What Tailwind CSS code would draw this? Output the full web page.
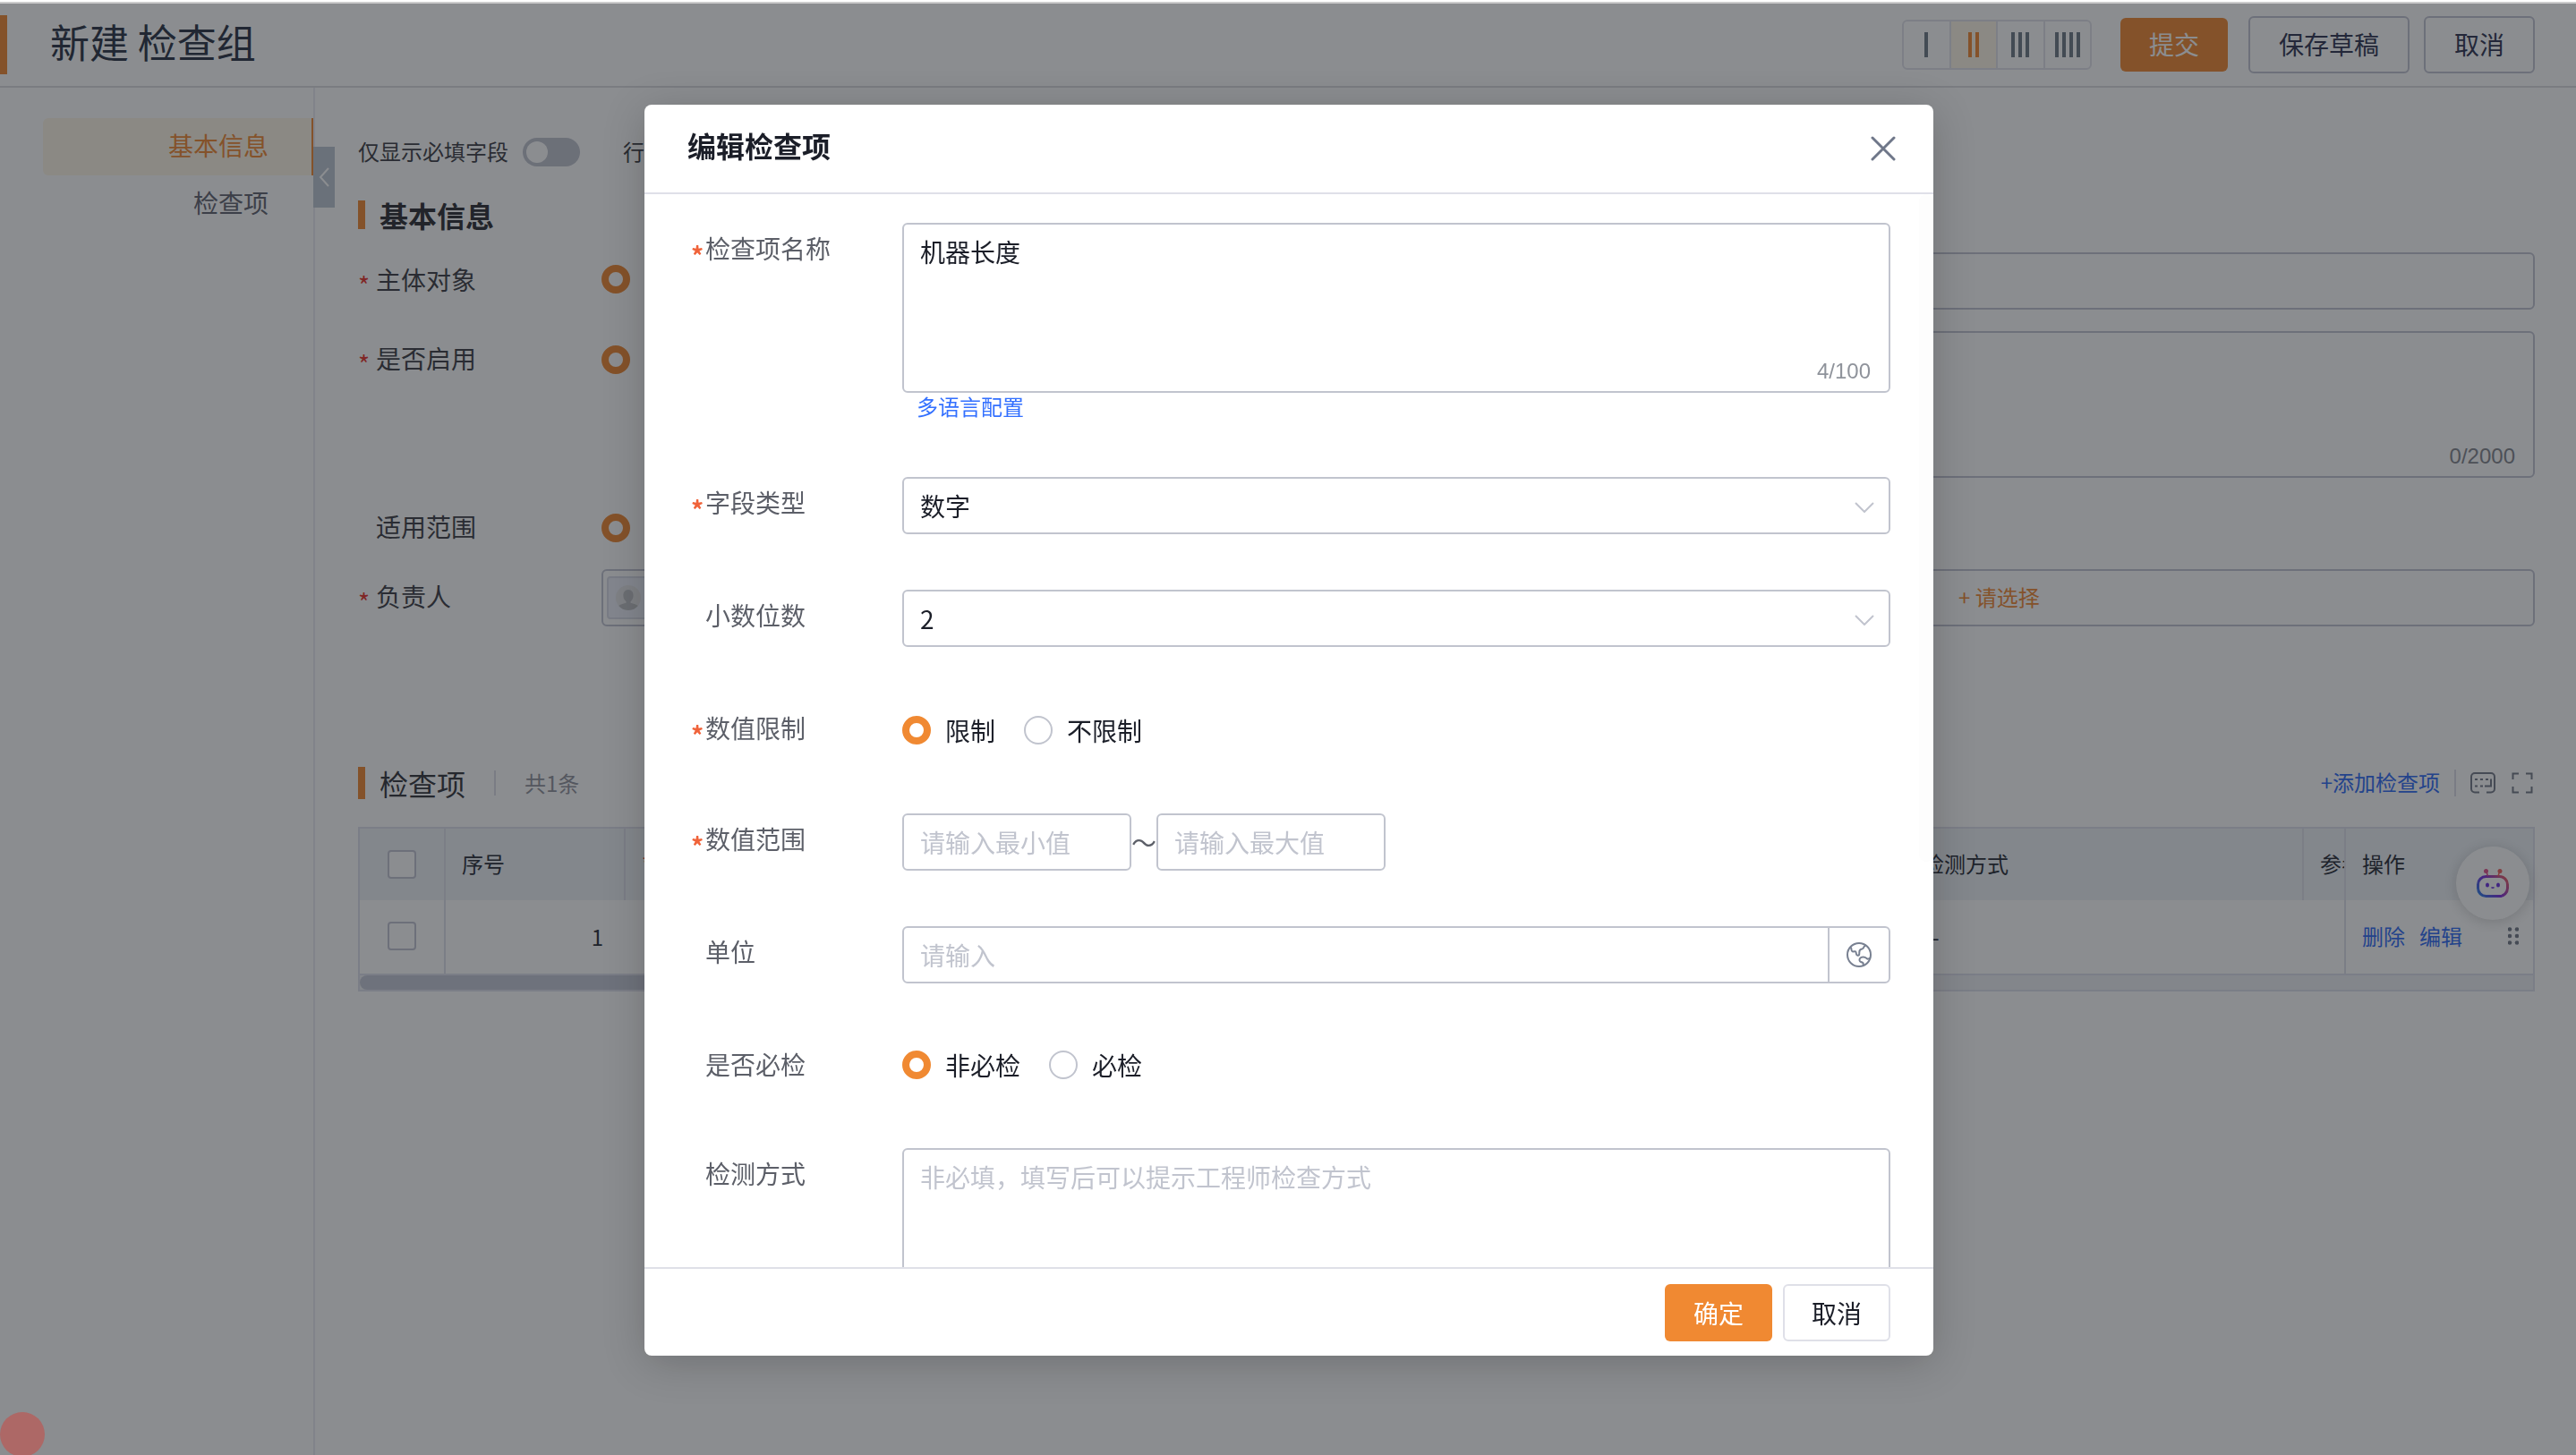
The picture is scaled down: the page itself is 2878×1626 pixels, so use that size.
<!DOCTYPE html>
<html lang="zh-CN">
<head>
<meta charset="utf-8">
<meta name="viewport" content="width=device-width, initial-scale=1">
<title>新建 检查组</title>
<script src="https://cdn.jsdelivr.net/npm/@tailwindcss/browser@4"></script>
</head>
<body class="min-h-screen flex flex-col overflow-hidden bg-white font-['Noto_Sans_CJK_SC',sans-serif] text-[28px] leading-10 text-[#3c3d44]">

  <!-- Page header -->
  <header class="mt-1 h-[94px] shrink-0 flex items-center border-b-2 border-[#dcdde0] pr-[46px]">
    <span class="w-2 h-[66px] bg-[#f08932]"></span>
    <h1 class="ml-12 pb-2 text-[44px] leading-[60px] text-[#2a3345]">新建 检查组</h1>
    <div class="ml-auto flex w-[212px] h-14 rounded-md border-2 border-[#e2e3ea] divide-x-2 divide-[#e2e3ea] overflow-hidden" role="group" aria-label="列数">
      <button type="button" aria-label="一列" class="flex-1 flex items-center justify-center gap-1 text-[#6f7a86]"><i class="w-1 h-7 bg-current"></i></button>
      <button type="button" aria-label="两列" class="flex-1 flex items-center justify-center gap-1 bg-[#fff7e6] text-[#f08932]"><i class="w-1 h-7 bg-current"></i><i class="w-1 h-7 bg-current"></i></button>
      <button type="button" aria-label="三列" class="flex-1 flex items-center justify-center gap-1 text-[#6f7a86]"><i class="w-1 h-7 bg-current"></i><i class="w-1 h-7 bg-current"></i><i class="w-1 h-7 bg-current"></i></button>
      <button type="button" aria-label="四列" class="flex-1 flex items-center justify-center gap-1 text-[#6f7a86]"><i class="w-1 h-7 bg-current"></i><i class="w-1 h-7 bg-current"></i><i class="w-1 h-7 bg-current"></i><i class="w-1 h-7 bg-current"></i></button>
    </div>
    <button type="button" class="ml-8 w-[120px] h-[60px] pb-0.5 rounded-md bg-[#f08932] text-white">提交</button>
    <button type="button" class="ml-[23px] w-[180px] h-16 pb-0.5 rounded-md border-2 border-[#c2c4d2] text-[#2e3350]">保存草稿</button>
    <button type="button" class="ml-4 w-[124px] h-16 pb-0.5 rounded-md border-2 border-[#c2c4d2] text-[#2e3350]">取消</button>
  </header>

  <div class="flex-1 flex">
    <!-- Section navigation -->
    <nav class="relative w-[352px] shrink-0 border-r-2 border-[#eaebf2] pt-[34px] pl-12">
      <a href="#basic" class="flex items-center justify-end h-16 pr-12 pb-1 rounded-l-md bg-[#fff7e6] border-r-2 border-[#f08932] text-[#f08932]">基本信息</a>
      <a href="#items" class="flex items-center justify-end h-16 pr-[50px] pb-1 text-[#61626e]">检查项</a>
      <button type="button" aria-label="收起" class="absolute left-[350px] top-[66px] w-6 h-[68px] flex items-center justify-center bg-[#bcc6d2] text-white">
        <svg class="w-3 h-6" viewBox="0 0 12 24" fill="none" stroke="currentColor" stroke-width="2"><path d="M11 2 2 12l9 10"/></svg>
      </button>
    </nav>

    <main class="flex-1 min-w-0 pl-12 pr-[46px] pt-[54px]">
      <div class="flex items-center h-9 text-2xl leading-9">
        <label for="required-only" class="pb-0.5">仅显示必填字段</label>
        <input id="required-only" type="checkbox" role="switch" class="ml-4 appearance-none w-16 h-8 rounded-full bg-[#c1c4cf] before:block before:size-6 before:m-1 before:rounded-full before:bg-white">
        <span class="ml-12 pb-0.5">行</span>
      </div>

      <section id="basic">
        <h2 class="mt-8 flex items-center h-10 text-[32px] font-bold text-[#2c2d33]"><span class="w-2 h-8 mr-4 bg-[#f08932]"></span>基本信息</h2>
        <div class="mt-[22px] grid grid-cols-2 gap-x-10 gap-y-6">
          <div class="flex items-center h-[60px]">
            <label for="subject" class="w-[272px] flex items-center"><span class="w-5 text-[28px] leading-8 pt-3 text-[#e8302a]">*</span>主体对象</label>
            <input id="subject" type="radio" checked class="appearance-none size-8 rounded-full border-8 border-[#f08932] bg-white">
          </div>
          <div class="flex pl-[200px]"><input type="text" aria-label="名称" class="w-full h-16 px-5 rounded-md border-2 border-[#c2c4d2]"></div>
          <div class="flex items-center h-16">
            <label for="enabled" class="w-[272px] flex items-center pb-1"><span class="w-5 text-[28px] leading-8 pt-3 text-[#e8302a]">*</span>是否启用</label>
            <input id="enabled" type="radio" checked class="appearance-none size-8 rounded-full border-8 border-[#f08932] bg-white">
          </div>
          <div class="relative flex pl-[200px]">
            <textarea aria-label="描述" class="w-full h-[164px] px-5 rounded-md border-2 border-[#c2c4d2] resize-none"></textarea>
            <span class="absolute right-[22px] bottom-2 font-['Liberation_Sans',sans-serif] text-2xl text-[#82858d] leading-8">0/2000</span>
          </div>
          <div class="col-span-2 flex h-[54px] items-start">
            <label for="scope" class="w-[272px] pl-5 pt-[10px]">适用范围</label>
            <input id="scope" type="radio" checked class="mt-4 appearance-none size-8 rounded-full border-8 border-[#f08932] bg-white">
          </div>
          <div class="col-span-2 flex items-center h-16">
            <span class="w-[272px] shrink-0 flex items-center pb-1"><span class="w-5 text-[28px] leading-8 pt-3 text-[#e8302a]">*</span>负责人</span>
            <div class="flex-1 h-16 p-1 flex items-center rounded-md border-2 border-[#c2c4d2]">
              <span class="w-[69%] h-12 flex items-center pl-2 rounded-sm border-2 border-[#dadde8] bg-[#eef1fb]">
                <svg class="size-7" viewBox="0 0 28 28"><circle cx="14" cy="14" r="14" fill="#e6e6e8"/><path d="M14 5c4 0 5.600 3 5.600 6.500 0 3-1.500 5.500-3.100 6.800v1.500c4 .8 6.500 2 8.300 3.300A14 14 0 0 1 14 28 14 14 0 0 1 3.200 23.100c1.800-1.300 4.300-2.500 8.300-3.300v-1.500c-1.600-1.300-3.100-3.800-3.100-6.800C8.400 8 10 5 14 5z" fill="#bfc0c4"/></svg>
              </span>
              <button type="button" class="ml-7 pb-0.5 text-2xl text-[#f08932]">+ 请选择</button>
            </div>
          </div>
        </div>
      </section>

      <section id="items" class="mt-[155px]">
        <div class="flex items-center h-10">
          <h2 class="flex items-center text-[32px] text-[#33343a]"><span class="w-2 h-9 mr-4 bg-[#f08932]"></span>检查项</h2>
          <span class="ml-8 w-[2px] h-7 bg-[#dcdde6]"></span>
          <span class="ml-8 text-2xl text-[#91939c]">共1条</span>
          <button type="button" class="ml-auto pb-0.5 text-2xl text-[#2f6bf5]">+添加检查项</button>
          <span class="mx-4 w-[2px] h-[30px] bg-[#dcdde6]"></span>
          <button type="button" aria-label="列设置" class="text-[#747b88]">
            <svg class="w-7 h-6" viewBox="0 0 28 24" fill="none" stroke="currentColor" stroke-width="2"><path d="M10 22.500H5a4 4 0 0 1-4-4V5a4 4 0 0 1 4-4h18a4 4 0 0 1 4 4v13.500a4 4 0 0 1-4 4h-5"/><path d="M5 8h3m3 0h3m3 0h3M5 15.500h3m3 0h3m2 0h7V7.500"/></svg>
          </button>
          <button type="button" aria-label="全屏" class="ml-[18px] mr-[2px] text-[#747b88]">
            <svg class="size-6" viewBox="0 0 24 24" fill="none" stroke="currentColor" stroke-width="2"><path d="M1.500 8V1.500H8M16 1.500h6.500V8M22.500 16v6.500H16M8 22.500H1.500V16"/></svg>
          </button>
        </div>

        <div class="mt-[29px] border-2 border-[#dfe0ec] text-2xl text-[#262a35]">
          <table class="w-full table-fixed text-left">
            <colgroup><col class="w-[95px]"><col class="w-[201px]"><col><col class="w-[443px]"><col class="w-[47px]"><col class="w-[210px]"></colgroup>
            <thead>
              <tr class="h-20 bg-[#eff3f7]">
                <th class="border-r-2 border-[#dfe0ea] pl-[31px]"><input type="checkbox" aria-label="全选" class="block appearance-none size-8 rounded-sm border-2 border-[#c2c4d2] bg-white"></th>
                <th class="border-r-2 border-[#dfe0ea] pl-[18px] pb-0.5 font-normal">序号</th>
                <th class="pl-[18px] pb-0.5 font-normal text-[#e8302a]">*</th>
                <th class="border-r-2 border-[#dfe0ea] pl-[18px] pb-0.5 font-normal">检测方式</th>
                <th class="border-r-2 border-[#dfe0ea] pl-[18px] pb-0.5 font-normal overflow-hidden whitespace-nowrap">参考</th>
                <th class="pl-[18px] pb-0.5 font-normal">操作</th>
              </tr>
            </thead>
            <tbody>
              <tr class="h-[82px]">
                <td class="border-r-2 border-[#dfe0ea] pl-[31px] pb-0.5"><input type="checkbox" aria-label="选择第1行" class="block appearance-none size-8 rounded-sm border-2 border-[#c2c4d2] bg-white"></td>
                <td class="pr-6 text-right">1</td>
                <td></td>
                <td class="pl-5">--</td>
                <td class="border-r-2 border-[#dfe0ea]"></td>
                <td class="pl-[18px] pr-4 pb-0.5">
                  <div class="flex items-center gap-4">
                    <a href="#delete" class="text-[#2f6bf5]">删除</a>
                    <a href="#edit" class="text-[#2f6bf5]">编辑</a>
                    <svg class="ml-auto w-3 h-5" viewBox="0 0 12 20" fill="#747b88"><circle cx="2" cy="2.500" r="2.300"/><circle cx="10" cy="2.500" r="2.300"/><circle cx="2" cy="10" r="2.300"/><circle cx="10" cy="10" r="2.300"/><circle cx="2" cy="17.500" r="2.300"/><circle cx="10" cy="17.500" r="2.300"/></svg>
                  </div>
                </td>
              </tr>
            </tbody>
          </table>
          <div class="h-[18px] border-t-2 border-[#dfe0ec] bg-[#eff0f4]"><div class="w-1/2 h-4 rounded-full bg-[#c5c9d6]"></div></div>
        </div>
      </section>
    </main>
  </div>

  <!-- Assistant bubble -->
  <button type="button" aria-label="智能助手" class="fixed right-[52px] top-[946px] size-[82px] flex items-center justify-center rounded-full bg-white shadow-[0_2px_16px_rgba(0,0,0,0.18)]">
    <svg class="w-9 h-8" viewBox="0 0 36 32" fill="none">
      <defs><linearGradient id="bot" x1="4" y1="30" x2="32" y2="6" gradientUnits="userSpaceOnUse"><stop stop-color="#2f7be8"/><stop offset=".45" stop-color="#7a2be0"/><stop offset="1" stop-color="#f0605c"/></linearGradient></defs>
      <rect x="1.500" y="8.500" width="33" height="22" rx="9" stroke="url(#bot)" stroke-width="3"/>
      <path d="M12.500 8 11 3.500" stroke="#d8488c" stroke-width="1.500"/><path d="M24 8l1.500-4.500" stroke="#f0605c" stroke-width="1.500"/>
      <circle cx="10.500" cy="2.500" r="2.500" fill="#e0508c"/><circle cx="26" cy="2.500" r="2.500" fill="#f0605c"/>
      <ellipse cx="12" cy="18" rx="2" ry="2.600" fill="#6a2ee0"/><ellipse cx="24" cy="18" rx="2" ry="2.600" fill="#6a2ee0"/>
      <path d="M16.500 20.500q1.500 1.500 3 0" stroke="#6a2ee0" stroke-width="1.500"/>
    </svg>
  </button>

  <!-- Edit dialog over the dimmed page -->
  <div class="fixed inset-x-0 top-[2px] bottom-0 border-t-2 border-[#cccccc] bg-[#181b22]/50 bg-clip-padding flex justify-center pt-[113px] pb-[111px] pl-0.5">
    <div role="dialog" aria-modal="true" aria-labelledby="dlg-title" class="relative w-[1440px] max-w-full flex flex-col rounded-lg bg-white overflow-hidden shadow-[0_8px_48px_rgba(0,0,0,0.2)]">
      <div class="h-[100px] shrink-0 flex items-center justify-between border-b-2 border-[#dfe0e8] pl-12 pr-[42px]">
        <h2 id="dlg-title" class="pb-2 text-[32px] font-bold text-[#1b1e28]">编辑检查项</h2>
        <button type="button" aria-label="关闭" class="text-[#6f7789]"><svg class="size-7" viewBox="0 0 28 28" fill="none" stroke="currentColor" stroke-width="3" stroke-linecap="round"><path d="M2 2l24 24M26 2 2 26"/></svg></button>
      </div>

      <form class="flex-1 min-h-0 overflow-hidden px-12 pt-8 text-[#1b1e28]">
        <div class="flex">
          <label for="f-name" class="w-60 shrink-0 flex pt-2 text-[#5c5f68]"><span class="w-5 pl-1 pt-2 font-bold text-[#f0633a]">*</span>检查项名称</label>
          <div class="relative flex-1 h-[284px]">
            <textarea id="f-name" class="block w-full h-[190px] px-[18px] py-[10px] rounded-md border-2 border-[#c1c4ce] resize-none">机器长度</textarea>
            <span class="absolute right-[22px] top-[150px] font-['Liberation_Sans',sans-serif] text-2xl text-[#8f939b] leading-8">4/100</span>
            <a href="#i18n" class="block pl-4 text-2xl leading-[30px] text-[#3370ff]">多语言配置</a>
          </div>
        </div>

        <div class="flex h-[126px]">
          <label for="f-type" class="w-60 shrink-0 flex pt-2 text-[#5c5f68]"><span class="w-5 pl-1 pt-2 font-bold text-[#f0633a]">*</span>字段类型</label>
          <div class="relative flex-1">
            <select id="f-type" class="appearance-none w-full h-16 px-[18px] rounded-md border-2 border-[#c1c4ce] bg-white"><option>数字</option></select>
            <svg class="absolute right-[18px] top-[28px] w-[22px] h-3" viewBox="0 0 22 12" fill="none" stroke="#c1c4ce" stroke-width="2"><path d="M1 1l10 10L21 1"/></svg>
          </div>
        </div>

        <div class="flex h-[126px]">
          <label for="f-digits" class="w-60 shrink-0 flex pt-2 pl-5 text-[#5c5f68]">小数位数</label>
          <div class="relative flex-1">
            <select id="f-digits" class="appearance-none w-full h-16 px-[18px] rounded-md border-2 border-[#c1c4ce] bg-white"><option>2</option></select>
            <svg class="absolute right-[18px] top-[28px] w-[22px] h-3" viewBox="0 0 22 12" fill="none" stroke="#c1c4ce" stroke-width="2"><path d="M1 1l10 10L21 1"/></svg>
          </div>
        </div>

        <div class="flex items-start h-[124px]">
          <span class="w-60 shrink-0 flex pt-2 text-[#5c5f68]"><span class="w-5 pl-1 pt-2 font-bold text-[#f0633a]">*</span>数值限制</span>
          <div class="flex h-[61px] items-center gap-8">
            <label class="flex items-center gap-4"><input type="radio" name="limit" checked class="appearance-none size-8 rounded-full border-8 border-[#f08932] bg-white">限制</label>
            <label class="flex items-center gap-4"><input type="radio" name="limit" class="appearance-none size-8 rounded-full border-2 border-[#c1c4ce] bg-white">不限制</label>
          </div>
        </div>

        <div class="flex h-[126px]">
          <label for="f-min" class="w-60 shrink-0 flex pt-2 text-[#5c5f68]"><span class="w-5 pl-1 pt-2 font-bold text-[#f0633a]">*</span>数值范围</label>
          <input id="f-min" type="text" placeholder="请输入最小值" class="w-64 h-16 px-[18px] rounded-md border-2 border-[#c1c4ce] placeholder:text-[#c1c4ce]">
          <span class="w-7 pt-3 text-[#5c5f68]">～</span>
          <input id="f-max" type="text" aria-label="最大值" placeholder="请输入最大值" class="w-64 h-16 px-[18px] rounded-md border-2 border-[#c1c4ce] placeholder:text-[#c1c4ce]">
        </div>

        <div class="flex h-[126px]">
          <label for="f-unit" class="w-60 shrink-0 flex pt-2 pl-5 text-[#5c5f68]">单位</label>
          <div class="flex-1 flex h-16 rounded-md border-2 border-[#c1c4ce]">
            <input id="f-unit" type="text" placeholder="请输入" class="flex-1 px-[18px] placeholder:text-[#c1c4ce]">
            <button type="button" aria-label="多语言" class="w-[68px] flex items-center justify-center border-l-2 border-[#c1c4ce]">
              <svg class="size-7" viewBox="0 0 28 28" fill="none" stroke="#788091" stroke-width="2" stroke-linejoin="round"><circle cx="14" cy="14" r="13"/><path d="M5 5.500c.5 2 .3 4.500 1.500 4.800 2 .5 3.500-.8 4 .7.500 1.500 0 3 1.500 3.500 2.500.8 2.300-1.500 2.300-3.200 0-2.500 1.200-3.600 3-3.800 2-.2 1.500-2 2.700-3l1-1"/><path d="M26.500 17.500c-2 1.500-3.500 1.500-4.500.2-1.500-1.700-5.500-1.700-7 .3-1 1.500-.5 3.500 1 4 1.800.6 3 .5 2.800 2.500l-.3 2"/></svg>
            </button>
          </div>
        </div>

        <div class="flex items-start h-[122px]">
          <span class="w-60 shrink-0 pt-2 pl-5 text-[#5c5f68]">是否必检</span>
          <div class="flex h-[58px] items-center gap-8">
            <label class="flex items-center gap-4"><input type="radio" name="must" checked class="appearance-none size-8 rounded-full border-8 border-[#f08932] bg-white">非必检</label>
            <label class="flex items-center gap-4"><input type="radio" name="must" class="appearance-none size-8 rounded-full border-2 border-[#c1c4ce] bg-white">必检</label>
          </div>
        </div>

        <div class="flex">
          <label for="f-method" class="w-60 shrink-0 flex pt-2 pl-5 text-[#5c5f68]">检测方式</label>
          <textarea id="f-method" placeholder="非必填，填写后可以提示工程师检查方式" class="flex-1 h-[190px] px-[18px] py-[10px] rounded-md border-2 border-[#c1c4ce] resize-none placeholder:text-[#c1c4ce]"></textarea>
        </div>
      </form>
      <span class="absolute right-0 top-[100px] w-4 h-[746px] rounded-full bg-[#fdfdfd]"></span>

      <div class="h-[99px] shrink-0 flex items-center justify-end gap-3 border-t-2 border-[#dfe0e8] px-12">
        <button type="button" class="w-[120px] h-16 rounded-md bg-[#f08932] text-white">确定</button>
        <button type="button" class="w-[120px] h-16 rounded-md border-2 border-[#dfe0e8] text-[#1b1e28]">取消</button>
      </div>
    </div>
  </div>

  <span class="fixed left-0 -bottom-[2px] size-[50px] rounded-full bg-[#ad6866]"></span>
</body>
</html>
